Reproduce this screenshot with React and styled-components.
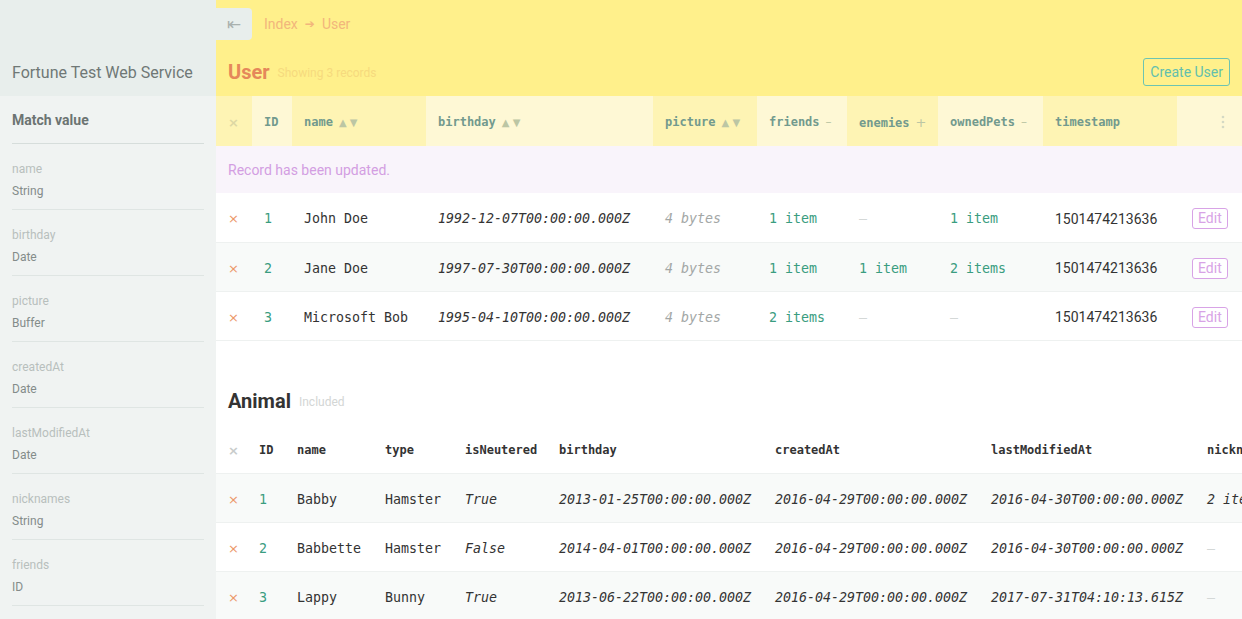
import React from "react";
import styled, { createGlobalStyle } from "styled-components";

const GlobalStyle = createGlobalStyle`
  html, body { margin: 0; padding: 0; }
  body {
    font-family: Roboto, "Liberation Sans", sans-serif;
    background: #ffffff;
    color: #333;
    overflow: hidden;
  }
`;

const MONO = `"DejaVu Sans Mono", "Liberation Mono", monospace`;

const Layout = styled.div`
  display: flex;
  width: 1242px;
  height: 619px;
  overflow: hidden;
`;

const Sidebar = styled.aside`
  width: 216px;
  flex: 0 0 216px;
  display: flex;
  flex-direction: column;
  background: #f0f3f2;
`;

const SidebarTop = styled.div`
  height: 96px;
  flex-shrink: 0;
  box-sizing: border-box;
  background: #e8eeec;
  display: flex;
  align-items: flex-end;
  padding: 0 12px 13px;
`;

const SiteTitle = styled.div`
  font-size: 16px;
  line-height: 20px;
  color: #6f7876;
`;

const SidebarBody = styled.div`
  flex-shrink: 0;
  padding: 0 12px;
`;

const MatchHeading = styled.div`
  font-size: 14px;
  font-weight: 700;
  line-height: 20px;
  color: #6c7472;
  padding: 14px 0 13px;
  border-bottom: 1px solid #d6dddb;
`;

const Field = styled.div`
  display: flex;
  flex-direction: column;
  gap: 6px;
  padding: 17px 0 10px;
  border-bottom: 1px solid #dfe5e3;
`;

const FieldName = styled.span`
  font-size: 12px;
  line-height: 16px;
  color: #b8bfbd;
`;

const FieldType = styled.span`
  font-size: 12px;
  line-height: 16px;
  color: #848c8a;
`;

const Main = styled.main`
  flex: 1;
  min-width: 0;
  overflow: hidden;
  display: flex;
  flex-direction: column;
`;

const Header = styled.header`
  background: #fff08b;
  height: 96px;
  flex-shrink: 0;
  display: flex;
  flex-direction: column;
`;

const TopBar = styled.div`
  height: 48px;
  box-sizing: border-box;
  padding-top: 8px;
  display: flex;
  align-items: flex-start;
`;

const CollapseButton = styled.button`
  width: 36px;
  height: 32px;
  border: 0;
  margin: 0;
  padding: 0;
  background: #e8eeec;
  border-radius: 0 4px 4px 0;
  color: #a9b1ae;
  font-family: "DejaVu Sans", sans-serif;
  font-size: 17px;
  display: flex;
  align-items: center;
  justify-content: center;
`;

const Breadcrumb = styled.nav`
  display: flex;
  align-items: center;
  gap: 7px;
  height: 32px;
  margin-left: 12px;
  font-size: 14px;
  color: #f2b67c;
`;

const Arrow = styled.span`
  font-family: "DejaVu Sans", sans-serif;
  font-size: 12px;
`;

const TitleRow = styled.div`
  height: 48px;
  display: flex;
  align-items: center;
  padding: 0 12px;
`;

const Title = styled.h1`
  margin: 0;
  font-size: 20px;
  font-weight: 700;
  line-height: 26px;
  color: ${(p) => p.$color};
`;

const Subtitle = styled.span`
  margin-left: 8px;
  font-size: 12px;
  color: ${(p) => p.$color};
  position: relative;
  top: 1px;
`;

const CreateButton = styled.button`
  margin-left: auto;
  height: 28px;
  padding: 0 6px;
  border: 1px solid #6cc4b2;
  border-radius: 3px;
  background: transparent;
  color: #62bfae;
  font-family: Roboto, sans-serif;
  font-size: 14px;
`;

const Table = styled.table`
  border-collapse: collapse;
  table-layout: fixed;
  width: ${(p) => p.$width}px;
`;

const HeadCell = styled.th`
  height: ${(p) => p.$h || 50}px;
  box-sizing: border-box;
  padding: 2px 12px 0;
  text-align: left;
  font-family: ${MONO};
  font-size: 12px;
  font-weight: 700;
  white-space: nowrap;
  overflow: hidden;
  color: ${(p) => p.$color || "#729a8e"};
  background: ${(p) => p.$bg || "transparent"};
`;

const SortMark = styled.span`
  margin-left: 6px;
  font-family: "DejaVu Sans", sans-serif;
  font-size: ${(p) => p.$size || 10}px;
  font-weight: 400;
  color: #bcc6a4;
  white-space: pre;
`;

const Notice = styled.td`
  height: 47px;
  padding: 0 12px;
  background: #f9f4fb;
  color: #d39ee2;
  font-size: 14px;
`;

const Row = styled.tr`
  background: ${(p) => (p.$alt ? "#f8faf9" : "#ffffff")};
  border-bottom: 1px solid #eef1f0;
`;

const Cell = styled.td`
  height: 49px;
  box-sizing: border-box;
  padding: 3px 12px 0;
  padding-left: ${(p) => p.$pl || 12}px;
  white-space: nowrap;
  overflow: hidden;
  font-family: ${(p) => (p.$sans ? "Roboto, sans-serif" : MONO)};
  font-size: ${(p) => (p.$sans ? "14px" : "13.3px")};
  font-style: ${(p) => (p.$italic ? "italic" : "normal")};
  color: ${(p) => p.$color || "#333"};
`;

const RemoveMark = styled.span`
  font-family: "DejaVu Sans", sans-serif;
  font-size: 13px;
  color: ${(p) => p.$color || "#ec9868"};
`;

const EditButton = styled.button`
  height: 21px;
  padding: 0 5px;
  border: 1px solid #d8a3e6;
  border-radius: 3px;
  background: #fff;
  color: #d8a3e6;
  font-family: Roboto, sans-serif;
  font-size: 14px;
  line-height: 19px;
`;

const Kebab = styled.span`
  display: flex;
  justify-content: flex-end;
  padding-right: 5px;
  color: #d4d9c4;
`;

const Section = styled.section`
  padding-top: ${(p) => p.$top}px;
`;

const SectionTitle = styled.div`
  display: flex;
  align-items: center;
  padding: 0 12px 12px;
`;

const DARK = "#fef4b4";
const LIGHT = "#fef8d5";

const fields = [
  ["name", "String"],
  ["birthday", "Date"],
  ["picture", "Buffer"],
  ["createdAt", "Date"],
  ["lastModifiedAt", "Date"],
  ["nicknames", "String"],
  ["friends", "ID"],
  ["enemies", "ID"],
];

const userCols = [36, 40, 134, 227, 104, 90, 91, 105, 134, 65];

const users = [
  { id: 1, name: "John Doe", birthday: "1992-12-07T00:00:00.000Z", friends: "1 item", enemies: null, pets: "1 item" },
  { id: 2, name: "Jane Doe", birthday: "1997-07-30T00:00:00.000Z", friends: "1 item", enemies: "1 item", pets: "2 items" },
  { id: 3, name: "Microsoft Bob", birthday: "1995-04-10T00:00:00.000Z", friends: "2 items", enemies: null, pets: null },
];

const animalCols = [31, 38, 88, 80, 94, 216, 216, 216, 130, 130];

const animals = [
  { id: 1, name: "Babby", type: "Hamster", neutered: "True", birthday: "2013-01-25T00:00:00.000Z", created: "2016-04-29T00:00:00.000Z", modified: "2016-04-30T00:00:00.000Z", nick: "2 items" },
  { id: 2, name: "Babbette", type: "Hamster", neutered: "False", birthday: "2014-04-01T00:00:00.000Z", created: "2016-04-29T00:00:00.000Z", modified: "2016-04-30T00:00:00.000Z", nick: null },
  { id: 3, name: "Lappy", type: "Bunny", neutered: "True", birthday: "2013-06-22T00:00:00.000Z", created: "2016-04-29T00:00:00.000Z", modified: "2017-07-31T04:10:13.615Z", nick: null },
];

const GREEN = "#3a9d80";
const Dash = () => <Cell $color="#d4d8d7">—</Cell>;

function KebabIcon() {
  return (
    <svg width="4" height="14" viewBox="0 0 4 14">
      <circle cx="2" cy="2" r="1.3" fill="currentColor" />
      <circle cx="2" cy="7" r="1.3" fill="currentColor" />
      <circle cx="2" cy="12" r="1.3" fill="currentColor" />
    </svg>
  );
}

export default function App() {
  return (
    <>
      <GlobalStyle />
      <Layout>
        <Sidebar>
          <SidebarTop>
            <SiteTitle>Fortune Test Web Service</SiteTitle>
          </SidebarTop>
          <SidebarBody>
            <MatchHeading>Match value</MatchHeading>
            {fields.map(([n, t]) => (
              <Field key={n}>
                <FieldName>{n}</FieldName>
                <FieldType>{t}</FieldType>
              </Field>
            ))}
          </SidebarBody>
        </Sidebar>
        <Main>
          <Header>
            <TopBar>
              <CollapseButton>⇤</CollapseButton>
              <Breadcrumb>
                <span>Index</span>
                <Arrow>➔</Arrow>
                <span>User</span>
              </Breadcrumb>
            </TopBar>
            <TitleRow>
              <Title $color="#e5885a">User</Title>
              <Subtitle $color="#f6da7e">Showing 3 records</Subtitle>
              <CreateButton>Create User</CreateButton>
            </TitleRow>
          </Header>

          <Table $width={1026}>
            <colgroup>
              {userCols.map((w, i) => (
                <col key={i} style={{ width: w }} />
              ))}
            </colgroup>
            <thead>
              <tr>
                <HeadCell $bg={DARK} $color="#ddd8a4">
                  <RemoveMark $color="#ddd8a4">×</RemoveMark>
                </HeadCell>
                <HeadCell $bg={LIGHT}>ID</HeadCell>
                <HeadCell $bg={DARK}>
                  name<SortMark>▲ ▼</SortMark>
                </HeadCell>
                <HeadCell $bg={LIGHT}>
                  birthday<SortMark>▲ ▼</SortMark>
                </HeadCell>
                <HeadCell $bg={DARK}>
                  picture<SortMark>▲ ▼</SortMark>
                </HeadCell>
                <HeadCell $bg={LIGHT}>
                  friends<SortMark $size={12}>–</SortMark>
                </HeadCell>
                <HeadCell $bg={DARK}>
                  enemies<SortMark $size={13}>+</SortMark>
                </HeadCell>
                <HeadCell $bg={LIGHT}>
                  ownedPets<SortMark $size={12}>–</SortMark>
                </HeadCell>
                <HeadCell $bg={DARK}>timestamp</HeadCell>
                <HeadCell $bg={LIGHT}>
                  <Kebab>
                    <KebabIcon />
                  </Kebab>
                </HeadCell>
              </tr>
            </thead>
            <tbody>
              <tr>
                <Notice colSpan={10}>Record has been updated.</Notice>
              </tr>
              {users.map((u, i) => (
                <Row key={u.id} $alt={i === 1}>
                  <Cell>
                    <RemoveMark>×</RemoveMark>
                  </Cell>
                  <Cell $color={GREEN}>{u.id}</Cell>
                  <Cell>{u.name}</Cell>
                  <Cell $italic>{u.birthday}</Cell>
                  <Cell $italic $color="#a3a7a6">4 bytes</Cell>
                  <Cell $color={GREEN}>{u.friends}</Cell>
                  {u.enemies ? <Cell $color={GREEN}>{u.enemies}</Cell> : <Dash />}
                  {u.pets ? <Cell $color={GREEN}>{u.pets}</Cell> : <Dash />}
                  <Cell $sans>1501474213636</Cell>
                  <Cell $pl={15}>
                    <EditButton>Edit</EditButton>
                  </Cell>
                </Row>
              ))}
            </tbody>
          </Table>

          <Section $top={47}>
            <SectionTitle>
              <Title $color="#333">Animal</Title>
              <Subtitle $color="#d3d6d5">Included</Subtitle>
            </SectionTitle>
            <Table $width={animalCols.reduce((a, b) => a + b, 0)}>
              <colgroup>
                {animalCols.map((w, i) => (
                  <col key={i} style={{ width: w }} />
                ))}
              </colgroup>
              <thead>
                <Row>
                  <HeadCell $h={48} $color="#c8cccb">
                    <RemoveMark $color="#c8cccb">×</RemoveMark>
                  </HeadCell>
                  <HeadCell $h={48} $color="#333">ID</HeadCell>
                  <HeadCell $h={48} $color="#333">name</HeadCell>
                  <HeadCell $h={48} $color="#333">type</HeadCell>
                  <HeadCell $h={48} $color="#333">isNeutered</HeadCell>
                  <HeadCell $h={48} $color="#333">birthday</HeadCell>
                  <HeadCell $h={48} $color="#333">createdAt</HeadCell>
                  <HeadCell $h={48} $color="#333">lastModifiedAt</HeadCell>
                  <HeadCell $h={48} $color="#333">nicknames</HeadCell>
                  <HeadCell $h={48} $color="#333">owner</HeadCell>
                </Row>
              </thead>
              <tbody>
                {animals.map((a, i) => (
                  <Row key={a.id} $alt={i !== 1}>
                    <Cell>
                      <RemoveMark>×</RemoveMark>
                    </Cell>
                    <Cell $color={GREEN}>{a.id}</Cell>
                    <Cell>{a.name}</Cell>
                    <Cell>{a.type}</Cell>
                    <Cell $italic>{a.neutered}</Cell>
                    <Cell $italic>{a.birthday}</Cell>
                    <Cell $italic>{a.created}</Cell>
                    <Cell $italic>{a.modified}</Cell>
                    {a.nick ? <Cell $italic>{a.nick}</Cell> : <Dash />}
                    <Cell $color={GREEN}>1</Cell>
                  </Row>
                ))}
              </tbody>
            </Table>
          </Section>
        </Main>
      </Layout>
    </>
  );
}
